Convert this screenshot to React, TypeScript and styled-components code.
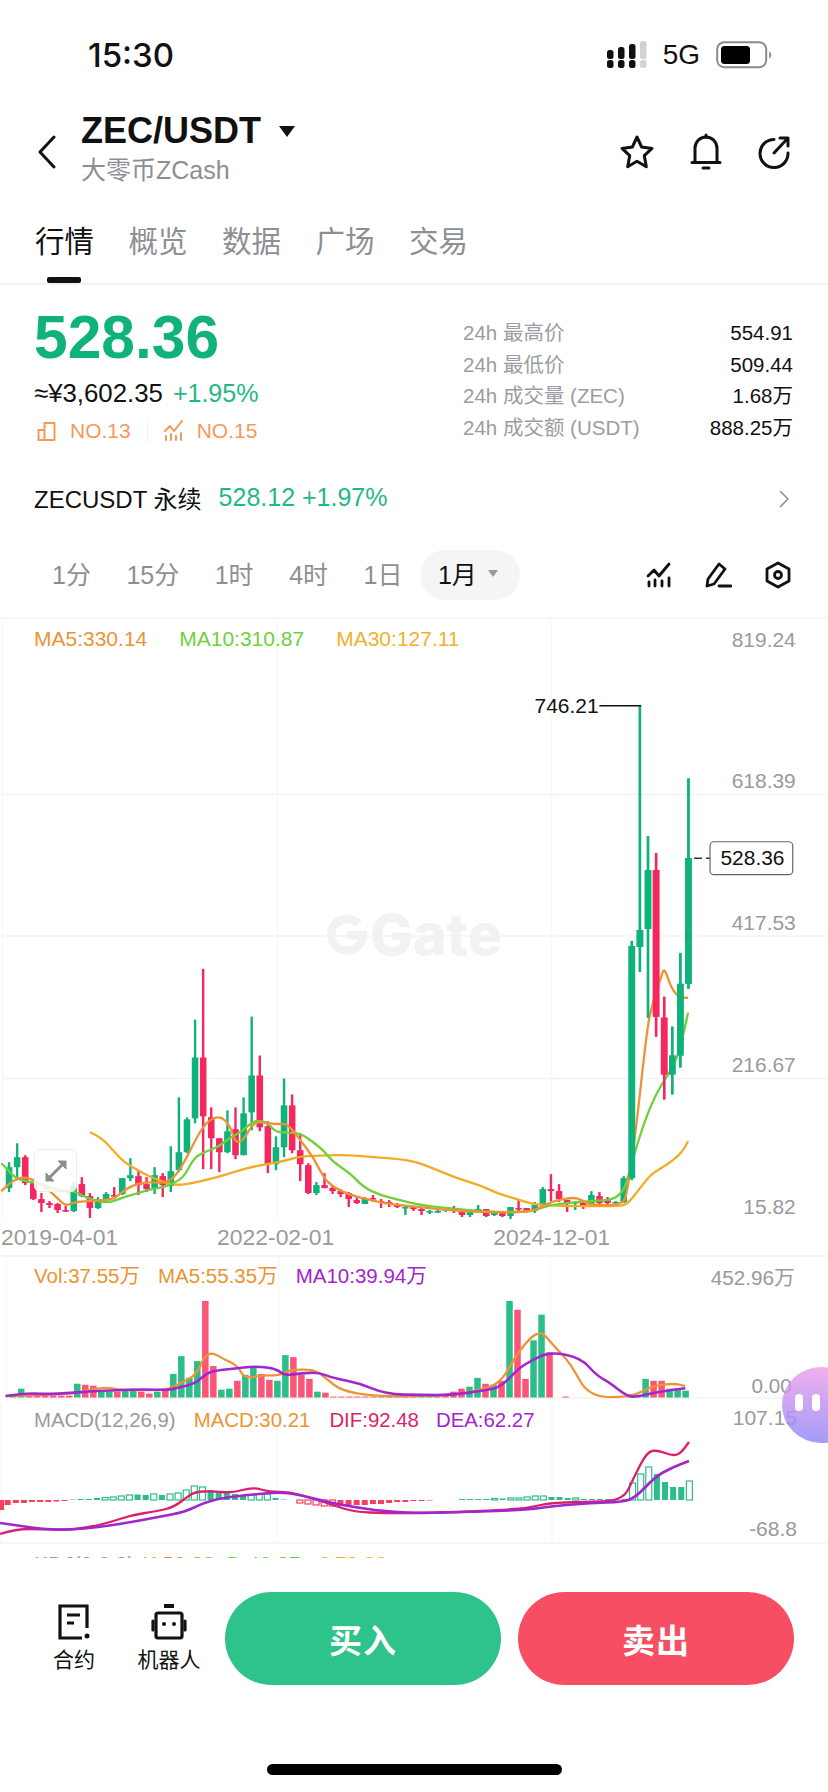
import React from 'react';
import styled, { createGlobalStyle } from 'styled-components';

const FONT = '"Liberation Sans", "Noto Sans CJK SC", sans-serif';
const GREEN = '#10b27c';
const RED = '#f4275f';
const BAR_GREEN = '#2dbd8a';
const BAR_RED = '#fb5578';
const MA5 = '#ec9433';
const MA10 = '#6ed13c';
const MA30 = '#f2ab24';
const PURPLE = '#a126cc';
const DIF = '#dc1f6c';
const AXIS = '#9a9a9a';
const GRID = '#f3f3f3';

type Pt = [number, number];
type Candle = [number, number, number, number, 0 | 1];

// high, body top, body bottom, low (page y), 1 = rising
const CANDLES: Candle[] = [
  [1162, 1167, 1188, 1192, 1], [1143, 1157, 1167, 1177, 1], [1155, 1157, 1183, 1185, 0], [1182, 1183, 1199, 1200, 0],
  [1193, 1199, 1203, 1212, 0], [1201, 1203, 1205, 1208, 0], [1203, 1204, 1210, 1213, 0], [1206, 1210, 1211, 1212, 0],
  [1182, 1185, 1211, 1212, 1], [1177, 1184, 1196, 1197, 0], [1193, 1196, 1208, 1218, 0], [1197, 1199, 1208, 1209, 1],
  [1192, 1194, 1199, 1203, 1], [1187, 1195, 1196, 1198, 0], [1178, 1178, 1194, 1195, 1], [1158, 1175, 1178, 1181, 1],
  [1170, 1176, 1185, 1195, 0], [1177, 1184, 1189, 1192, 0], [1167, 1175, 1189, 1194, 1], [1173, 1176, 1185, 1197, 0],
  [1146, 1171, 1186, 1192, 1], [1097, 1152, 1170, 1172, 1], [1117, 1119, 1152, 1153, 1], [1019, 1057, 1118, 1123, 1],
  [968, 1057, 1116, 1169, 0], [1107, 1117, 1138, 1169, 0], [1138, 1138, 1152, 1172, 0], [1110, 1131, 1152, 1153, 1],
  [1107, 1129, 1155, 1159, 0], [1097, 1113, 1155, 1155, 1], [1016, 1075, 1112, 1130, 1], [1055, 1075, 1127, 1131, 0],
  [1121, 1126, 1164, 1173, 0], [1136, 1147, 1164, 1170, 1], [1078, 1105, 1147, 1157, 1], [1094, 1105, 1150, 1153, 0],
  [1133, 1150, 1164, 1181, 0], [1163, 1165, 1193, 1194, 0], [1182, 1185, 1193, 1195, 1], [1173, 1185, 1188, 1188, 0],
  [1185, 1188, 1191, 1194, 0], [1189, 1191, 1194, 1197, 0], [1192, 1193, 1199, 1207, 0], [1197, 1200, 1203, 1204, 0],
  [1197, 1198, 1204, 1204, 1], [1195, 1198, 1199, 1202, 0], [1199, 1201, 1202, 1208, 0], [1200, 1202, 1203, 1207, 0],
  [1203, 1204, 1207, 1208, 0], [1206, 1207, 1207, 1215, 1], [1206, 1207, 1209, 1211, 0], [1207, 1209, 1211, 1215, 0],
  [1210, 1211, 1212, 1214, 1], [1210, 1211, 1212, 1213, 1], [1207, 1209, 1210, 1212, 1], [1206, 1209, 1211, 1213, 0],
  [1210, 1211, 1215, 1217, 0], [1209, 1211, 1215, 1217, 1], [1205, 1209, 1211, 1213, 1], [1209, 1209, 1216, 1217, 0],
  [1211, 1212, 1215, 1216, 1], [1211, 1212, 1216, 1217, 0], [1207, 1207, 1216, 1219, 1], [1199, 1208, 1209, 1212, 0],
  [1208, 1208, 1211, 1211, 0], [1202, 1205, 1211, 1213, 1], [1187, 1189, 1204, 1205, 1], [1174, 1189, 1191, 1201, 0],
  [1184, 1191, 1199, 1202, 0], [1200, 1200, 1203, 1212, 0], [1201, 1202, 1203, 1210, 1], [1201, 1202, 1205, 1209, 0],
  [1191, 1195, 1205, 1207, 1], [1192, 1196, 1203, 1205, 0], [1197, 1199, 1203, 1205, 0], [1201, 1202, 1203, 1206, 1],
  [1176, 1178, 1202, 1203, 1], [940, 945, 1178, 1180, 1], [704, 929, 946, 971, 1], [835, 869, 928, 1017, 1],
  [852, 869, 1016, 1036, 0], [996, 1017, 1074, 1099, 0], [1026, 1055, 1074, 1094, 1], [952, 983, 1055, 1067, 1],
  [777, 857, 983, 988, 1],
];

const PRICE_MA5: Pt[] = [
  [0, 1191], [8, 1183], [17, 1178], [25, 1177], [37, 1182], [48, 1190], [57, 1199], [65, 1206], [73, 1202], [87, 1201],
  [100, 1200], [113, 1199], [123, 1190], [137, 1183], [150, 1182], [163, 1183], [173, 1178], [183, 1163], [193, 1143],
  [203, 1125], [213, 1117], [222, 1117], [230, 1127], [235, 1143], [243, 1140], [253, 1122], [263, 1122], [277, 1124],
  [287, 1123], [300, 1140], [313, 1157], [323, 1177], [333, 1187], [350, 1195], [367, 1199], [383, 1203], [400, 1205],
  [420, 1207], [457, 1211], [490, 1212], [523, 1212], [537, 1210], [550, 1202], [573, 1197], [583, 1200], [590, 1205],
  [623, 1205], [628, 1193], [637, 1127], [648, 1027], [653, 1003], [662, 977], [665, 966], [672, 987], [680, 997], [689, 997],
];
const PRICE_MA10: Pt[] = [
  [0, 1163], [7, 1170], [13, 1177], [23, 1181], [37, 1183], [50, 1188], [63, 1191], [73, 1191], [82, 1196], [90, 1199],
  [100, 1202], [110, 1202], [123, 1197], [137, 1193], [150, 1189], [163, 1187], [173, 1183], [183, 1177], [193, 1158],
  [203, 1152], [217, 1147], [230, 1137], [240, 1132], [250, 1123], [257, 1120], [267, 1122], [275, 1132], [287, 1132],
  [300, 1133], [313, 1142], [323, 1150], [333, 1162], [350, 1173], [363, 1187], [380, 1195], [400, 1200], [420, 1205],
  [457, 1209], [490, 1212], [520, 1212], [537, 1210], [550, 1205], [567, 1203], [590, 1201], [623, 1199], [633, 1160],
  [648, 1113], [660, 1088], [670, 1073], [680, 1053], [689, 1012],
];
const PRICE_MA30: Pt[] = [
  [89, 1132], [100, 1137], [112, 1150], [123, 1162], [137, 1170], [150, 1177], [163, 1182], [175, 1185], [187, 1184],
  [200, 1181], [217, 1177], [233, 1172], [250, 1167], [267, 1164], [283, 1161], [297, 1157], [307, 1156], [328, 1155],
  [350, 1155], [373, 1157], [400, 1159], [417, 1162], [430, 1167], [447, 1174], [463, 1180], [480, 1185], [497, 1193],
  [517, 1199], [533, 1204], [547, 1205], [567, 1206], [590, 1206], [620, 1206], [628, 1204], [637, 1193], [650, 1176],
  [660, 1169], [673, 1161], [683, 1152], [689, 1141],
];

// bar height, 1 = rising
const VOLUME: [number, 0 | 1][] = [
  [3, 1], [9, 1], [3, 0], [2, 0], [2, 0], [2, 0], [2, 0], [2, 0], [14, 1], [13, 0], [12, 0], [6, 1], [6, 1], [6, 0],
  [7, 1], [9, 1], [6, 0], [4, 0], [6, 1], [7, 0], [24, 1], [42, 1], [20, 1], [37, 1], [98, 0], [32, 0], [8, 1], [9, 1],
  [17, 0], [23, 1], [30, 1], [24, 0], [18, 0], [17, 1], [43, 1], [41, 0], [23, 0], [19, 0], [6, 1], [5, 0], [1, 0], [1, 0],
  [1, 0], [1, 0], [1, 0], [1, 0], [1, 1], [1, 0], [1, 1], [1, 0], [1, 0], [1, 1], [1, 1], [1, 1], [2, 0], [6, 0], [9, 0],
  [11, 1], [20, 1], [14, 0], [13, 1], [17, 0], [98, 1], [89, 0], [19, 0], [58, 1], [84, 1], [46, 0], [0, 1], [1, 0],
  [0, 1], [0, 1], [0, 1], [0, 1], [0, 1], [0, 1], [0, 1], [3, 1], [1, 1], [19, 1], [17, 0], [17, 0], [9, 1], [9, 1], [7, 1],
];
const VOL_MA5: Pt[] = [
  [0, 1396], [67, 1394], [83, 1390], [103, 1387], [117, 1390], [140, 1390], [163, 1390], [177, 1383], [193, 1375],
  [202, 1355], [210, 1352], [220, 1358], [235, 1365], [242, 1378], [260, 1375], [277, 1375], [287, 1370], [300, 1369],
  [315, 1370], [327, 1380], [340, 1390], [370, 1396], [420, 1396], [455, 1395], [480, 1390], [502, 1383], [520, 1350],
  [541, 1328], [554, 1343], [573, 1363], [591, 1397], [634, 1397], [655, 1386], [678, 1383], [689, 1386],
];
const VOL_MA10: Pt[] = [
  [0, 1396], [20, 1393], [40, 1394], [67, 1393], [87, 1391], [113, 1390], [140, 1389], [163, 1390], [173, 1388], [193, 1383],
  [203, 1373], [213, 1370], [233, 1368], [250, 1366], [267, 1367], [277, 1370], [283, 1375], [300, 1373], [317, 1372],
  [333, 1378], [359, 1383], [385, 1394], [422, 1395], [454, 1395], [486, 1390], [502, 1387], [520, 1368], [533, 1360],
  [552, 1351], [583, 1357], [599, 1375], [612, 1382], [631, 1397], [644, 1396], [665, 1391], [689, 1388],
];

// histogram value in px from the zero line, 1 = outlined bar
const MACD: [number, 0 | 1][] = [
  [-5, 0], [-3, 0], [-3, 0], [-2, 0], [-2, 0], [-2, 0], [-1.5, 0], [-1, 0], [0.5, 0], [1, 0], [1, 0], [2, 0], [2.5, 1], [3, 1],
  [4, 1], [5, 1], [5.5, 0], [5, 0], [6, 1], [5, 0], [6, 1], [7, 1], [10, 1], [14, 1], [13, 1], [10, 0], [9, 0], [7, 0], [6, 0],
  [5, 0], [5, 1], [6, 1], [6, 1], [2, 0], [0.5, 0], [0, 0], [-3, 1], [-4, 1], [-5, 1], [-6, 1], [-6, 1], [-6, 0], [-6, 0],
  [-5, 0], [-5, 0], [-4, 0], [-4, 0], [-3, 0], [-2, 0], [-2, 0], [-1, 0], [-1, 0], [-0.5, 0], [0, 0], [0, 0], [0, 0],
  [1, 0], [1, 0], [1, 0], [1, 0], [1.5, 1], [1.5, 0], [2, 1], [2, 1], [3, 1], [4, 1], [4, 1], [3, 0], [3, 0], [2, 0], [2, 1],
  [1, 0], [1, 0], [1, 0], [1, 0], [1, 0], [1, 0], [17, 1], [26, 1], [33, 1], [26, 0], [18, 0], [13, 0], [13, 0], [19, 1],
];
const DIF_LINE: Pt[] = [
  [0, 1534], [16, 1529], [42, 1529], [69, 1530], [90, 1527], [111, 1522], [132, 1515], [158, 1511], [174, 1507], [187, 1497],
  [195, 1492], [211, 1491], [232, 1493], [253, 1487], [269, 1492], [290, 1492], [311, 1498], [333, 1505], [354, 1512],
  [385, 1513], [422, 1513], [459, 1512], [502, 1510], [528, 1508], [549, 1503], [581, 1502], [623, 1501], [634, 1477],
  [647, 1452], [657, 1450], [673, 1456], [681, 1453], [689, 1442],
];
const DEA_LINE: Pt[] = [
  [0, 1523], [21, 1526], [42, 1529], [69, 1530], [100, 1527], [132, 1522], [158, 1517], [185, 1512], [203, 1503], [222, 1498],
  [248, 1495], [280, 1492], [301, 1495], [327, 1502], [359, 1508], [391, 1512], [422, 1513], [459, 1512], [502, 1511],
  [533, 1509], [554, 1506], [591, 1503], [623, 1502], [636, 1497], [655, 1477], [671, 1468], [689, 1461],
];

const STATS = [
  ['24h 最高价', '554.91'],
  ['24h 最低价', '509.44'],
  ['24h 成交量 (ZEC)', '1.68万'],
  ['24h 成交额 (USDT)', '888.25万'],
];
const TABS = ['行情', '概览', '数据', '广场', '交易'];
const PERIODS = ['1分', '15分', '1时', '4时', '1日'];

const slotX = (i: number) => 7.7 + 8.115 * i;

// midpoints as on-curve points, so the averages read as smooth lines
const smooth = (pts: Pt[]) => {
  let d = `M${pts[0][0]} ${pts[0][1]}`;
  for (let i = 1; i < pts.length - 1; i++) {
    const mx = (pts[i][0] + pts[i + 1][0]) / 2;
    const my = (pts[i][1] + pts[i + 1][1]) / 2;
    d += `Q${pts[i][0]} ${pts[i][1]} ${mx} ${my}`;
  }
  const last = pts[pts.length - 1];
  return `${d}L${last[0]} ${last[1]}`;
};

const GlobalStyle = createGlobalStyle`
  html, body {
    margin: 0;
    background: #fff;
    font-family: ${FONT};
  }
`;

const Page = styled.div`
  position: relative;
  width: 828px;
  height: 1792px;
  overflow: hidden;
  background: #fff;
  color: #111;
`;

const StatusBar = styled.div`
  height: 110px;
  padding: 0 56px 0 88px;
  box-sizing: border-box;
  display: flex;
  align-items: center;
  justify-content: space-between;
`;

const Clock = styled.span`
  font-family: Inter, sans-serif;
  font-size: 33px;
  font-weight: 500;
`;

const StatusIcons = styled.div`
  display: flex;
  align-items: center;
  gap: 14px;
`;

const Network = styled.span`
  font-size: 28px;
  margin-right: 2px;
`;

const Header = styled.div`
  height: 90px;
  box-sizing: border-box;
  display: flex;
  align-items: center;
  padding: 0 37px 6px 37px;
`;

const TitleBlock = styled.div`
  margin-left: 24px;
  flex: 1;
  align-self: flex-start;
`;

const TitleRow = styled.div`
  display: flex;
  align-items: center;
  gap: 18px;
`;

const Title = styled.div`
  font-size: 36px;
  line-height: 42px;
  font-weight: 700;
`;

const Caret = styled.div`
  border-left: 8px solid transparent;
  border-right: 8px solid transparent;
  border-top: 11px solid #111;
`;

const Subtitle = styled.div`
  font-size: 25px;
  line-height: 34px;
  color: #8c8f94;
  margin-top: 1px;
`;

const HeaderIcons = styled.div`
  display: flex;
  align-items: center;
  gap: 35px;
`;

const Tabs = styled.div`
  height: 85px;
  box-sizing: border-box;
  padding: 22px 0 0 35px;
  display: flex;
  gap: 34.5px;
  border-bottom: 2px solid #f2f2f2;
`;

const Tab = styled.div<{ $active?: boolean }>`
  position: relative;
  height: 61px;
  font-size: 29.5px;
  line-height: 40px;
  color: ${(p) => (p.$active ? '#111' : '#8c8f94')};
  ${(p) =>
    p.$active &&
    `&::after {
      content: '';
      position: absolute;
      left: 12px;
      bottom: 0;
      width: 34px;
      height: 6px;
      border-radius: 2px;
      background: #111;
    }`}
`;

const Summary = styled.div`
  height: 184px;
  padding: 0 35px 0 34px;
  display: flex;
  justify-content: space-between;
`;

const PriceBlock = styled.div`
  padding-top: 22px;
`;

const Price = styled.div`
  font-size: 60.5px;
  line-height: 60px;
  font-weight: 700;
  color: ${GREEN};
`;

const FiatRow = styled.div`
  display: flex;
  align-items: center;
  gap: 10px;
  font-size: 25.8px;
  line-height: 30px;
  margin-top: 11px;
`;

const Change = styled.span`
  color: #1fb985;
  font-size: 25px;
`;

const RankRow = styled.div`
  display: flex;
  align-items: center;
  margin: 8px 0 0 3px;
  height: 30px;
  font-size: 21px;
  color: #f39a5b;
`;

const Rank = styled.div`
  display: flex;
  align-items: center;
  gap: 13px;
`;

const RankDivider = styled.div`
  width: 1px;
  height: 24px;
  background: #f2f2f2;
  margin: 0 16px;
`;

const StatTable = styled.div`
  width: 330px;
  padding-top: 32px;
`;

const StatRow = styled.div`
  display: flex;
  justify-content: space-between;
  height: 31.6px;
  line-height: 31.6px;
  font-size: 20.5px;
`;

const StatLabel = styled.span`
  color: #9a9da3;
`;

const PerpRow = styled.div`
  height: 60px;
  padding: 0 39px 0 34px;
  display: flex;
  align-items: center;
  font-size: 24px;
`;

const PerpName = styled.span`
  margin: 0 17px 3px 0;
`;

const PerpQuote = styled.span`
  color: #1fb985;
  flex: 1;
  font-size: 25px;
  margin-bottom: 3px;
`;

const PeriodRow = styled.div`
  height: 88px;
  padding: 4px 37px 0 52px;
  box-sizing: border-box;
  display: flex;
  align-items: center;
  font-size: 25px;
  color: #8c8f94;
`;

const Period = styled.span`
  margin: 0 35.5px 4px 0;
`;

const PeriodActive = styled.div`
  width: 100px;
  height: 50px;
  margin-left: -18px;
  padding: 0 0 4px 18px;
  box-sizing: border-box;
  border-radius: 25px;
  display: flex;
  align-items: center;
  gap: 11px;
  background: #f5f5f5;
  color: #111;
`;

const PeriodCaret = styled.div`
  border-left: 5px solid transparent;
  border-right: 5px solid transparent;
  border-top: 7px solid #9a9a9a;
`;

const ToolIcons = styled.div`
  margin-left: auto;
  display: flex;
  align-items: center;
  gap: 33px;
  color: #111;
`;

const Pane = styled.div<{ $height: number; $line?: boolean }>`
  position: relative;
  height: ${(p) => p.$height}px;
  overflow: hidden;
  ${(p) => p.$line && `border-top: 2px solid #f6f6f6; box-sizing: border-box;`}
`;

const Plot = styled.svg`
  display: block;
  width: 828px;
  height: 100%;
`;

const AxisText = styled.text`
  font-family: ${FONT};
  font-size: 21px;
  fill: ${AXIS};
  text-anchor: end;
`;

const MarkerText = styled.text`
  font-family: ${FONT};
  font-size: 21px;
  fill: #111;
`;

const Legend = styled.div<{ $top: number; $size?: number }>`
  position: absolute;
  top: ${(p) => p.$top}px;
  left: 34px;
  display: flex;
  font-size: ${(p) => p.$size ?? 21}px;
  line-height: 26px;
  white-space: nowrap;
`;

const LegendItem = styled.span<{ $color: string; $gap: number }>`
  color: ${(p) => p.$color};
  margin-right: ${(p) => p.$gap}px;
`;

const Watermark = styled.div`
  position: absolute;
  left: 327px;
  top: 286px;
  display: flex;
  align-items: center;
  gap: 3px;
  font-family: Inter, sans-serif;
  font-size: 57px;
  line-height: 60px;
  font-weight: 800;
  color: #f1f2f3;
`;

const ExpandButton = styled.div`
  position: absolute;
  left: 34px;
  top: 530px;
  width: 41px;
  height: 41px;
  border: 1px solid #ececec;
  border-radius: 6px;
  background: rgba(255, 255, 255, 0.85);
  display: flex;
  align-items: center;
  justify-content: center;
`;

const DateRow = styled.div`
  height: 36px;
  display: flex;
  align-items: center;
  font-size: 22.9px;
  color: ${AXIS};
`;

const DateLabel = styled.span<{ $gap: number }>`
  margin-left: ${(p) => p.$gap}px;
`;

const ActionBar = styled.div`
  height: 127px;
  padding: 34px 33px 0 39px;
  box-sizing: border-box;
  display: flex;
  align-items: flex-start;
`;

const ToolLink = styled.div<{ $width: number }>`
  width: ${(p) => p.$width}px;
  display: flex;
  flex-direction: column;
  align-items: center;
  font-size: 21px;
  line-height: 28px;
  padding-top: 12px;
  gap: 6px;
`;

const TradeButton = styled.div<{ $bg: string }>`
  width: 276px;
  height: 93px;
  border-radius: 47px;
  background: ${(p) => p.$bg};
  color: #fff;
  font-size: 33px;
  font-weight: 700;
  letter-spacing: 1px;
  display: flex;
  align-items: center;
  justify-content: center;
`;

const ButtonGap = styled.div<{ $width: number }>`
  width: ${(p) => p.$width}px;
  flex-shrink: 0;
`;

const HomeBar = styled.div`
  width: 295px;
  height: 11px;
  border-radius: 6px;
  background: #000;
  margin: 79px auto 0;
`;

const Assistant = styled.div`
  position: absolute;
  left: 782px;
  top: 1367px;
  width: 78px;
  height: 76px;
  border-radius: 50%;
  background: linear-gradient(180deg, #f09dec 0%, #8e87f6 100%);
  opacity: 0.82;
`;

const Eye = styled.div<{ $left: number }>`
  position: absolute;
  left: ${(p) => p.$left}px;
  top: 27px;
  width: 8px;
  height: 17px;
  border-radius: 4px;
  background: #fff;
`;

const Icon = styled.svg`
  display: block;
  flex-shrink: 0;
  fill: none;
  stroke: currentColor;
  stroke-linecap: round;
  stroke-linejoin: round;
`;

const SignalIcon = () => (
  <svg width="42" height="28" viewBox="0 0 42 28">
    {[0, 11, 22].map((x, i) => (
      <g key={x} fill="#111">
        <rect x={x} y={19} width="6.5" height="8" rx="2.5" />
        <rect x={x} y={9 - i * 3} width="6.5" height={9 + i * 3} rx="2.5" />
      </g>
    ))}
    <rect x="33" y="0" width="6.5" height="18" rx="2.5" fill="#d2d2d2" />
    <rect x="33" y="19" width="6.5" height="8" rx="2.5" fill="#d2d2d2" />
  </svg>
);

const BatteryIcon = () => (
  <svg width="56" height="28" viewBox="0 0 56 28">
    <rect x="1.2" y="1.2" width="49" height="25" rx="7" fill="none" stroke="#8a8a8a" strokeWidth="2" />
    <rect x="5" y="5" width="29" height="18" rx="3.5" fill="#000" />
    <path d="M53 10.5c1.6.6 2.4 2 2.4 3.5s-.8 2.9-2.4 3.5z" fill="#9a9a9a" />
  </svg>
);

const BackIcon = () => (
  <Icon width="20" height="34" viewBox="0 0 20 34" strokeWidth="3">
    <path d="M17 2 3 17l14 15" />
  </Icon>
);

const StarIcon = () => (
  <Icon width="36" height="36" viewBox="0 0 36 36" strokeWidth="3">
    <path d="M18 3l4.6 10 10.4 1.4-7.7 7.3 2 11-9.3-5.4-9.3 5.4 2-11L3 14.400l10.400-1.400z" />
  </Icon>
);

const BellIcon = () => (
  <Icon width="32" height="38" viewBox="0 0 32 38" strokeWidth="3">
    <path d="M5 29V15a11 11 0 0 1 22 0v14" />
    <path d="M2 29.500h28M16 2v2M13 35h6" />
  </Icon>
);

const ShareIcon = () => (
  <Icon width="34" height="34" viewBox="0 0 34 34" strokeWidth="3">
    <path d="M17 4.500A14 14 0 1 0 31 18" />
    <path d="M17 18 31 3M23 3h8v8" />
  </Icon>
);

const RankBarIcon = () => (
  <Icon width="20" height="20" viewBox="0 0 20 20" strokeWidth="2">
    <path d="M1.500 9h6v10h-6zM7.500 19V2h10v17z" />
  </Icon>
);

const RankTrendIcon = () => (
  <Icon width="20" height="22" viewBox="0 0 20 22" strokeWidth="2">
    <path d="M1 11l5-5 4 5 8-10M2 20v-4M7 20v-6M12 20v-4M17 20v-7" />
  </Icon>
);

const ChartToolIcon = () => (
  <Icon width="26" height="26" viewBox="0 0 26 26" strokeWidth="2.800">
    <path d="M2 14l6-6 5 6 10-12M3 24v-4M9 24v-6M16 24v-5M23 24v-8" />
  </Icon>
);

const PenIcon = () => (
  <Icon width="27" height="26" viewBox="0 0 27 26" strokeWidth="2.800">
    <path d="M2 24l1-7L14 2l6 5L9 22zM14 24h12" />
  </Icon>
);

const HexIcon = () => (
  <Icon width="26" height="28" viewBox="0 0 26 28" strokeWidth="2.800">
    <path d="M13 2l11 6v12l-11 6-11-6V8z" />
    <circle cx="13" cy="14" r="3.500" />
  </Icon>
);

const ChevronIcon = () => (
  <Icon width="10" height="18" viewBox="0 0 10 18" strokeWidth="1.600" color="#8c8f94">
    <path d="M1.500 1.500 9 9l-7.500 7.500" />
  </Icon>
);

const ContractIcon = () => (
  <Icon width="32" height="36" viewBox="0 0 32 36" strokeWidth="3.200">
    <path d="M29 24V2H2v32h22M9 11h13M9 19h7" strokeLinecap="butt" strokeLinejoin="miter" />
    <circle cx="29" cy="32" r="2.500" fill="currentColor" stroke="none" />
  </Icon>
);

const BotIcon = () => (
  <Icon width="36" height="36" viewBox="0 0 36 36" strokeWidth="3.200">
    <path d="M13 2h10" strokeWidth="4" strokeLinecap="butt" />
    <rect x="5" y="9" width="26" height="25" rx="2" />
    <path d="M2 17v9M34 17v9" />
    <circle cx="13" cy="20" r="2" fill="currentColor" stroke="none" />
    <circle cx="23" cy="20" r="2" fill="currentColor" stroke="none" />
  </Icon>
);

const GateMark = () => (
  <svg width="40" height="40" viewBox="0 0 38 38" fill="none" stroke="#f1f2f3" strokeWidth="8">
    <path d="M30 8.500A15 15 0 1 0 34 19H19" />
  </svg>
);

const ExpandIcon = () => (
  <svg width="22" height="22" viewBox="0 0 22 22" fill="#8d8d8d" stroke="#8d8d8d">
    <path d="M13 1h8v8zM1 21v-8l8 8z" />
    <path d="M17 5 5 17" strokeWidth="3" />
  </svg>
);

const CandleMark = ({ c, i }: { c: Candle; i: number }) => {
  const x = slotX(i);
  const color = c[4] ? GREEN : RED;
  return (
    <g fill={color}>
      <rect x={x - 1.2} y={c[0]} width="2.4" height={c[3] - c[0]} />
      <rect x={x - 3.300} y={c[1]} width="6.600" height={Math.max(c[2] - c[1], 1.5)} />
    </g>
  );
};

const GridLines = ({ ys, from, to }: { ys: number[]; from: number; to: number }) => (
  <g strokeWidth="1.500">
    <g stroke={GRID}>
      {ys.map((y) => (
        <line key={y} x1="0" x2="828" y1={y} y2={y} />
      ))}
    </g>
    <g stroke="#f8f8f8">
      {[1, 277, 552].map((x) => (
        <line key={x} x1={x} x2={x} y1={from} y2={to} />
      ))}
    </g>
  </g>
);

const Trace = ({ pts, color, width = 2.300 }: { pts: Pt[]; color: string; width?: number }) => (
  <path d={smooth(pts)} fill="none" stroke={color} strokeWidth={width} strokeLinejoin="round" />
);

const PricePane = () => (
  <Pane $height={602} $line>
    <Plot viewBox="0 617 828 602">
      <GridLines ys={[793, 935, 1078]} from={617} to={1219} />
      <MarkerText x="557" y="1233">15.82</MarkerText>
      {CANDLES.map((c, i) => (
        <CandleMark key={i} c={c} i={i} />
      ))}
      <Trace pts={PRICE_MA30} color={MA30} />
      <Trace pts={PRICE_MA10} color={MA10} />
      <Trace pts={PRICE_MA5} color={MA5} />
      {CANDLES.slice(77).map((c, i) => (
        <CandleMark key={i} c={c} i={i + 77} />
      ))}
      <AxisText x="797" y="645">819.24</AxisText>
      <AxisText x="797" y="787">618.39</AxisText>
      <AxisText x="797" y="929">417.53</AxisText>
      <AxisText x="797" y="1072">216.67</AxisText>
      <AxisText x="797" y="1214">15.82</AxisText>
      <MarkerText x="535" y="711">746.21</MarkerText>
      <path d="M600 704h42" stroke="#111" strokeWidth="1.500" />
      <path d="M695 857h8M707 857h4" stroke="#333" strokeWidth="1.500" />
      <rect x="711" y="840.500" width="83" height="33" rx="4" fill="#fff" stroke="#666" strokeWidth="1.200" />
      <MarkerText x="721.500" y="864">528.36</MarkerText>
    </Plot>
    <Legend $top={7}>
      <LegendItem $color={MA5} $gap={32}>MA5:330.14</LegendItem>
      <LegendItem $color={MA10} $gap={32}>MA10:310.87</LegendItem>
      <LegendItem $color="#eeb32b" $gap={0}>MA30:127.11</LegendItem>
    </Legend>
    <Watermark>
      <GateMark />
      Gate
    </Watermark>
    <ExpandButton>
      <ExpandIcon />
    </ExpandButton>
  </Pane>
);

const VolumePane = () => (
  <Pane $height={147} $line>
    <Plot viewBox="0 1255 828 147">
      <GridLines ys={[1398]} from={1255} to={1402} />
      {VOLUME.map(([h, up], i) => (
        <rect key={i} x={slotX(i) - 3.300} y={1397.500 - h} width="6.600" height={h} fill={up ? BAR_GREEN : BAR_RED} />
      ))}
      <Trace pts={VOL_MA5} color={MA5} />
      <Trace pts={VOL_MA10} color={PURPLE} width={2.600} />
      <AxisText x="800" y="1283">452.96万</AxisText>
      <AxisText x="797" y="1393">0.00</AxisText>
    </Plot>
    <Legend $top={6} $size={20.5}>
      <LegendItem $color={MA5} $gap={18}>Vol:37.55万</LegendItem>
      <LegendItem $color={MA5} $gap={18}>MA5:55.35万</LegendItem>
      <LegendItem $color={PURPLE} $gap={0}>MA10:39.94万</LegendItem>
    </Legend>
  </Pane>
);

const MacdPane = () => (
  <Pane $height={140}>
    <Plot viewBox="0 1402 828 140">
      <GridLines ys={[]} from={1402} to={1542} />
      {MACD.map(([v, hollow], i) => {
        const color = v >= 0 ? BAR_GREEN : '#f5405f';
        const h = Math.abs(v);
        return (
          <rect
            key={i}
            x={slotX(i) - 3}
            y={v >= 0 ? 1500 - h : 1500}
            width="6"
            height={h}
            fill={hollow ? '#fff' : color}
            stroke={hollow ? color : 'none'}
            strokeWidth="1.200"
          />
        );
      })}
      <rect x="0" y="1500" width="4" height="10" fill="#f5405f" />
      <Trace pts={DIF_LINE} color={DIF} />
      <Trace pts={DEA_LINE} color={PURPLE} width={2.600} />
      <AxisText x="797" y="1425">107.15</AxisText>
      <AxisText x="797" y="1536">-68.8</AxisText>
    </Plot>
    <Legend $top={5} $size={20.4}>
      <LegendItem $color={AXIS} $gap={18}>MACD(12,26,9)</LegendItem>
      <LegendItem $color={MA5} $gap={19}>MACD:30.21</LegendItem>
      <LegendItem $color={DIF} $gap={17}>DIF:92.48</LegendItem>
      <LegendItem $color={PURPLE} $gap={0}>DEA:62.27</LegendItem>
    </Legend>
  </Pane>
);

const KdjPane = () => (
  <Pane $height={16} $line>
    <Legend $top={7}>
      <LegendItem $color={AXIS} $gap={8}>KDJ(9,3,3)</LegendItem>
      <LegendItem $color={MA5} $gap={12}>K:53.33</LegendItem>
      <LegendItem $color={MA10} $gap={18}>D:43.87</LegendItem>
      <LegendItem $color="#eeb32b" $gap={0}>J:73.33</LegendItem>
    </Legend>
  </Pane>
);

export default function App() {
  return (
    <Page>
      <GlobalStyle />
      <StatusBar>
        <Clock>15:30</Clock>
        <StatusIcons>
          <SignalIcon />
          <Network>5G</Network>
          <BatteryIcon />
        </StatusIcons>
      </StatusBar>
      <Header>
        <BackIcon />
        <TitleBlock>
          <TitleRow>
            <Title>ZEC/USDT</Title>
            <Caret />
          </TitleRow>
          <Subtitle>大零币ZCash</Subtitle>
        </TitleBlock>
        <HeaderIcons>
          <StarIcon />
          <BellIcon />
          <ShareIcon />
        </HeaderIcons>
      </Header>
      <Tabs>
        {TABS.map((t, i) => (
          <Tab key={t} $active={i === 0}>{t}</Tab>
        ))}
      </Tabs>
      <Summary>
        <PriceBlock>
          <Price>528.36</Price>
          <FiatRow>
            <span>≈¥3,602.35</span>
            <Change>+1.95%</Change>
          </FiatRow>
          <RankRow>
            <Rank>
              <RankBarIcon />
              NO.13
            </Rank>
            <RankDivider />
            <Rank>
              <RankTrendIcon />
              NO.15
            </Rank>
          </RankRow>
        </PriceBlock>
        <StatTable>
          {STATS.map(([label, value]) => (
            <StatRow key={label}>
              <StatLabel>{label}</StatLabel>
              <span>{value}</span>
            </StatRow>
          ))}
        </StatTable>
      </Summary>
      <PerpRow>
        <PerpName>ZECUSDT 永续</PerpName>
        <PerpQuote>528.12 +1.97%</PerpQuote>
        <ChevronIcon />
      </PerpRow>
      <PeriodRow>
        {PERIODS.map((p) => (
          <Period key={p}>{p}</Period>
        ))}
        <PeriodActive>
          1月
          <PeriodCaret />
        </PeriodActive>
        <ToolIcons>
          <ChartToolIcon />
          <PenIcon />
          <HexIcon />
        </ToolIcons>
      </PeriodRow>
      <PricePane />
      <DateRow>
        <DateLabel $gap={1}>2019-04-01</DateLabel>
        <DateLabel $gap={99}>2022-02-01</DateLabel>
        <DateLabel $gap={159}>2024-12-01</DateLabel>
      </DateRow>
      <VolumePane />
      <MacdPane />
      <KdjPane />
      <ActionBar>
        <ToolLink $width={70}>
          <ContractIcon />
          合约
        </ToolLink>
        <ButtonGap $width={15} />
        <ToolLink $width={90}>
          <BotIcon />
          机器人
        </ToolLink>
        <ButtonGap $width={11} />
        <TradeButton $bg="#2dc38a">买入</TradeButton>
        <ButtonGap $width={17} />
        <TradeButton $bg="#f74e63">卖出</TradeButton>
      </ActionBar>
      <HomeBar />
      <Assistant>
        <Eye $left={13} />
        <Eye $left={30} />
      </Assistant>
    </Page>
  );
}
